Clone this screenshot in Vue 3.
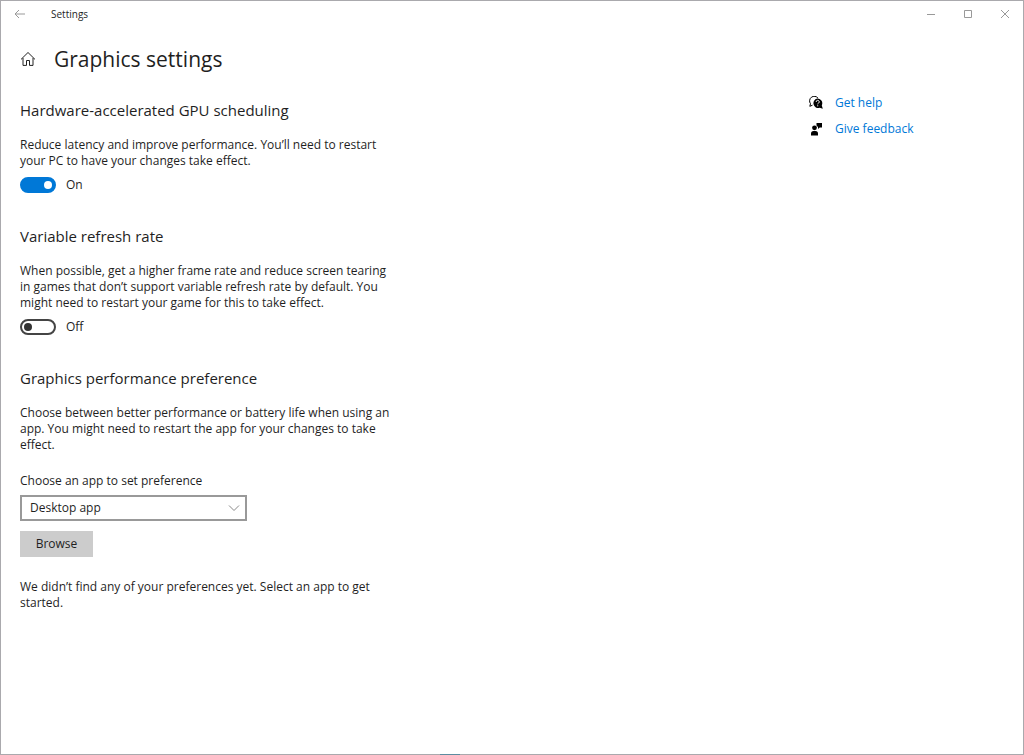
<script setup>
import { ref } from 'vue'

const gpuScheduling = ref(true)
const variableRefresh = ref(false)
const appType = ref('Desktop app')
</script>

<template>
  <div class="window">
    <header class="titlebar">
      <button class="back" type="button" aria-label="Back">
        <svg width="12" height="10" viewBox="0 0 12 10"><path d="M11 5H1M5 1L1 5l4 4" /></svg>
      </button>
      <span class="caption">Settings</span>
      <div class="controls">
        <button type="button" aria-label="Minimize">
          <svg width="10" height="10" viewBox="0 0 10 10"><path d="M1 5.5h8" /></svg>
        </button>
        <button type="button" aria-label="Maximize">
          <svg width="10" height="10" viewBox="0 0 10 10"><path d="M1.5 1.5h7v7h-7z" /></svg>
        </button>
        <button type="button" aria-label="Close">
          <svg width="10" height="10" viewBox="0 0 10 10"><path d="M1 1l8 8M9 1L1 9" /></svg>
        </button>
      </div>
    </header>

    <div class="heading">
      <button class="home" type="button" aria-label="Home">
        <svg width="16" height="16" viewBox="0 0 16 16"><path d="M1 8.4L8 1.5l7 6.9M3 7v7.4h3.5V9.5h3v4.9H13V7" /></svg>
      </button>
      <h1>Graphics settings</h1>
    </div>

    <div class="body">
      <main>
        <section>
          <h2>Hardware-accelerated GPU scheduling</h2>
          <p>Reduce latency and improve performance. You’ll need to restart your PC to have your changes take effect.</p>
          <label class="toggle">
            <input v-model="gpuScheduling" type="checkbox" role="switch" aria-label="Hardware-accelerated GPU scheduling">
            <span>{{ gpuScheduling ? 'On' : 'Off' }}</span>
          </label>
        </section>

        <section>
          <h2>Variable refresh rate</h2>
          <p>When possible, get a higher frame rate and reduce screen tearing in games that don’t support variable refresh rate by default. You might need to restart your game for this to take effect.</p>
          <label class="toggle">
            <input v-model="variableRefresh" type="checkbox" role="switch" aria-label="Variable refresh rate">
            <span>{{ variableRefresh ? 'On' : 'Off' }}</span>
          </label>
        </section>

        <section>
          <h2>Graphics performance preference</h2>
          <p>Choose between better performance or battery life when using an app. You might need to restart the app for your changes to take effect.</p>
          <label class="field-label" for="app-type">Choose an app to set preference</label>
          <div class="select">
            <select id="app-type" v-model="appType">
              <option>Desktop app</option>
              <option>Microsoft Store app</option>
            </select>
            <svg width="12" height="8" viewBox="0 0 12 8"><path d="M1 1.5l5 5 5-5" /></svg>
          </div>
          <button class="browse" type="button">Browse</button>
          <p>We didn’t find any of your preferences yet. Select an app to get started.</p>
        </section>
      </main>

      <aside>
        <a href="#help">
          <svg width="14" height="14" viewBox="0 0 14 14">
            <path class="line" d="M3.5 9.2L.8 10.3l.7-2.6A4.3 4.3 0 1 1 9 2.2" />
            <path d="M8.6 2.6a4.7 4.7 0 0 1 4.2 6.8l1 3.4-3.1-1.1A4.7 4.7 0 1 1 8.6 2.6z" />
            <path class="mark" d="M7.2 5.900a1.500 1.500 0 1 1 2.300 1.200c-.6.4-.8.6-.8 1.200M8.700 9.300v1" />
          </svg>
          <span>Get help</span>
        </a>
        <a href="#feedback">
          <svg width="14" height="14" viewBox="0 0 14 14">
            <circle cx="5.500" cy="5.800" r="2.400" />
            <path d="M2 13.500v-2q0-2.500 2.500-2.500h2q2.500 0 2.500 2.500v2z" />
            <path d="M7.500 1h5.500v4.500h-2.300L9 7V5L7.500 3.500z" />
          </svg>
          <span>Give feedback</span>
        </a>
      </aside>
    </div>
    <div class="edge" aria-hidden="true"></div>
  </div>
</template>

<style>
body {
  background: #fff;
}
</style>

<style scoped>
.window {
  position: relative;
  box-sizing: border-box;
  min-height: 100vh;
  border: 1px solid #aaa9ad;
  background: #fff;
  color: #1f1f1f;
  font: 12px/16px "Open Sans", "Noto Sans", sans-serif;
}
.edge {
  position: absolute;
  bottom: -1px;
  left: 43%;
  width: 20px;
  height: 1px;
  background: #5c8ca0;
}
button {
  margin: 0;
  padding: 0;
  border: 0;
  background: none;
  color: inherit;
  font: inherit;
}
svg {
  display: block;
  fill: none;
  stroke: currentColor;
}
.titlebar {
  display: flex;
  align-items: center;
  height: 26px;
}
.back {
  display: grid;
  place-items: center;
  width: 38px;
  height: 26px;
  color: #999;
}
.caption {
  margin-left: 12px;
  font-size: 10px;
}
.controls {
  display: flex;
  margin-left: auto;
  color: #999;
}
.controls button {
  display: grid;
  place-items: center;
  width: 37px;
  height: 26px;
}
.heading {
  display: flex;
  align-items: center;
  gap: 18px;
  height: 32px;
  margin: 16px 19px 0;
}
.home {
  color: #222;
}
h1 {
  margin: 0;
  font-size: 21px;
  line-height: 32px;
  font-weight: 400;
}
.body {
  display: flex;
  justify-content: space-between;
  padding: 24px 19px 0;
}
main {
  width: 370px;
}
section {
  margin-bottom: 32px;
}
h2 {
  margin: 0 0 16px;
  font-size: 15px;
  line-height: 22px;
  font-weight: 400;
  white-space: nowrap;
}
p {
  margin: 0;
}
.toggle {
  display: flex;
  align-items: center;
  gap: 10px;
  height: 16px;
  margin-top: 8px;
}
.toggle input {
  display: flex;
  align-items: center;
  box-sizing: border-box;
  appearance: none;
  width: 36px;
  height: 16px;
  margin: 0;
  padding: 0 2px;
  border: 2px solid #444;
  border-radius: 8px;
}
.toggle input::before {
  content: "";
  width: 8px;
  height: 8px;
  border-radius: 50%;
  background: #333;
}
.toggle input:checked {
  justify-content: flex-end;
  border-color: #0078d7;
  background: #0078d7;
}
.toggle input:checked::before {
  background: #fff;
}
.field-label {
  display: block;
  margin: 20px 0 6px;
}
.select {
  display: grid;
  align-items: center;
  width: 227px;
}
.select select,
.select svg {
  grid-area: 1 / 1;
}
.select select {
  appearance: none;
  width: 100%;
  height: 26px;
  padding: 0 28px 0 8px;
  border: 2px solid #999;
  border-radius: 0;
  background: #fff;
  color: inherit;
  font: inherit;
}
.select svg {
  justify-self: end;
  margin-right: 7px;
  color: #888;
  pointer-events: none;
}
.browse {
  display: block;
  width: 73px;
  height: 26px;
  margin: 10px 0 22px;
  background: #ccc;
}
aside {
  display: flex;
  flex-direction: column;
  gap: 10px;
  width: 195px;
  margin-top: -4px;
}
aside a {
  display: flex;
  align-items: center;
  gap: 12px;
  color: #0078d7;
  text-decoration: none;
}
aside svg {
  color: #000;
  fill: #000;
  stroke: none;
}
aside .line {
  fill: none;
  stroke: #000;
}
aside .mark {
  fill: none;
  stroke: #fff;
}
</style>
